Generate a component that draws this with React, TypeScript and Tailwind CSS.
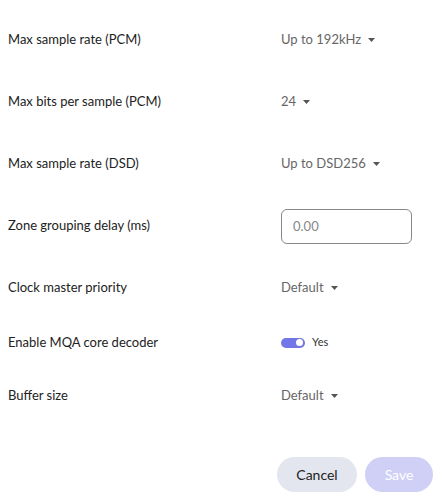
import { useState } from "react";

type Row =
    | { label: string; kind: "select"; value: string; h: string }
    | { label: string; kind: "input"; value: string; h: string }
    | { label: string; kind: "toggle"; value: boolean; h: string };

const rows: Row[] = [
    { label: "Max sample rate (PCM)", kind: "select", value: "Up to 192kHz", h: "h-[62px]" },
    { label: "Max bits per sample (PCM)", kind: "select", value: "24", h: "h-[62px]" },
    { label: "Max sample rate (DSD)", kind: "select", value: "Up to DSD256", h: "h-[62px]" },
    { label: "Zone grouping delay (ms)", kind: "input", value: "", h: "h-[62px]" },
    { label: "Clock master priority", kind: "select", value: "Default", h: "h-[62px]" },
    { label: "Enable MQA core decoder", kind: "toggle", value: true, h: "h-[47px]" },
    { label: "Buffer size", kind: "select", value: "Default", h: "h-[60px]" },
];

function Caret() {
    return (
        <svg width="7" height="4" viewBox="0 0 7 4" className="ml-[7px]">
            <path d="M0 0 L7 0 L3.5 4 Z" fill="#555" />
        </svg>
    );
}

export default function App() {
    const [mqa, setMqa] = useState(true);
    const [delay, setDelay] = useState("");

    return (
        <div className="w-[448px] h-[500px] bg-white font-['Lato','Liberation_Sans',sans-serif] text-[13px] text-[#222]">
            {/* Settings rows */}
            <div className="pt-[9px]">
                {rows.map((row) => (
                    <div key={row.label} className={`flex items-center ${row.h}`}>
                        <div className="w-[281px] pl-[8px]">{row.label}</div>
                        {row.kind === "select" && (
                            <div className="flex items-center text-[#666] cursor-pointer">
                                {row.value}
                                <Caret />
                            </div>
                        )}
                        {row.kind === "input" && (
                            <input
                                className="w-[131px] h-[35px] border border-[#888] rounded-[6px] px-[11px] text-[13px] text-[#222] placeholder:text-[#888] outline-none"
                                placeholder="0.00"
                                value={delay}
                                onChange={(e) => setDelay(e.target.value)}
                            />
                        )}
                        {row.kind === "toggle" && (
                            <div className="flex items-center gap-[7px]">
                                <button
                                    onClick={() => setMqa(!mqa)}
                                    className={`relative w-[24px] h-[10px] rounded-full ${mqa ? "bg-[#7376e6]" : "bg-[#ccc]"}`}
                                >
                                    <span
                                        className={`absolute top-[1.5px] w-[7px] h-[7px] rounded-full bg-white ${mqa ? "right-[2px]" : "left-[2px]"}`}
                                    />
                                </button>
                                <span className="text-[11px] text-[#333]">{mqa ? "Yes" : "No"}</span>
                            </div>
                        )}
                    </div>
                ))}
            </div>

            {/* Buttons */}
            <div className="flex justify-end gap-[8px] pr-[15px] mt-[31px]">
                <button className="w-[80px] h-[35px] rounded-full bg-[#e3e6ef] text-[#222] text-[14px]">
                    Cancel
                </button>
                <button className="w-[68px] h-[35px] rounded-full bg-[#d0d0f7] text-white text-[14px]" disabled>
                    Save
                </button>
            </div>
        </div>
    );
}
